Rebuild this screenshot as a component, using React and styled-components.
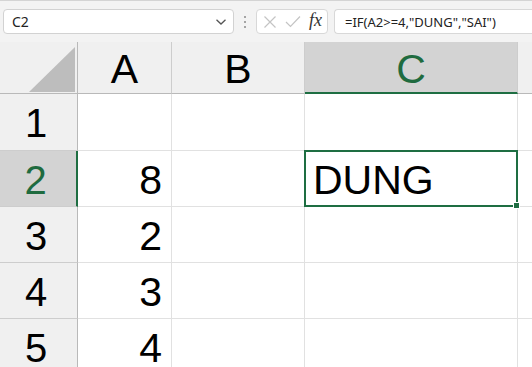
import React from 'react'
import styled, { createGlobalStyle } from 'styled-components'

const GlobalStyle = createGlobalStyle`
  html, body {
    margin: 0;
    padding: 0;
    background: #ffffff;
    overflow: hidden;
  }
  body {
    font-family: "Liberation Sans", Arial, sans-serif;
  }
`

const columns = ['A', 'B', 'C', 'D']
const rows = [
  { n: 1, a: '', c: '' },
  { n: 2, a: '8', c: 'DUNG' },
  { n: 3, a: '2', c: '' },
  { n: 4, a: '3', c: '' },
  { n: 5, a: '4', c: '' },
]

function App() {
  return (<>
    <GlobalStyle />
    <Page>
      <Toolbar>
        <NameBox>
          <NameText>C2</NameText>
          <svg width="12" height="8" viewBox="0 0 12 8">
            <path d="M1.5 1.8 L6 6 L10.5 1.8" fill="none" stroke="#555" strokeWidth="1.3" />
          </svg>
        </NameBox>
        <Dots>
          <span /><span /><span />
        </Dots>
        <FxBox>
          <svg width="14" height="14" viewBox="0 0 14 14">
            <path d="M1.5 1.5 L12.5 12.5 M12.5 1.5 L1.5 12.5" stroke="#c4c4c4" strokeWidth="1.2" fill="none" />
          </svg>
          <svg width="16" height="13" viewBox="0 0 16 13">
            <path d="M1 7 L5.5 11.5 L15 1.5" stroke="#c4c4c4" strokeWidth="1.2" fill="none" />
          </svg>
          <FxLabel>fx</FxLabel>
        </FxBox>
        <FormulaBox>=IF(A2&gt;=4,"DUNG","SAI")</FormulaBox>
      </Toolbar>

      <Sheet>
        <Corner>
          <svg width="78" height="52" viewBox="0 0 78 52">
            <polygon points="29,50 75,50 75,5" fill="#bdbdbd" />
          </svg>
        </Corner>
        {columns.map((c) => (
          <ColHeader key={c} $active={c === 'C'}>{c}</ColHeader>
        ))}

        {rows.map((r) => (
          <React.Fragment key={r.n}>
            <RowHeader $active={r.n === 2}>{r.n}</RowHeader>
            <Cell $align="right">{r.a}</Cell>
            <Cell />
            <Cell $selected={r.n === 2}>{r.c}</Cell>
            <Cell />
          </React.Fragment>
        ))}
      </Sheet>
    </Page>
  </>)
}

const Page = styled.div`
  width: 532px;
  height: 367px;
  overflow: hidden;
  display: flex;
  flex-direction: column;
`

const Toolbar = styled.div`
  height: 42px;
  box-sizing: border-box;
  border-top: 1px solid #d4d4d4;
  background: #f3f3f3;
  display: flex;
  align-items: flex-start;
  padding: 8px 0 0 3px;
  flex-shrink: 0;
`

const NameBox = styled.div`
  width: 231px;
  height: 25px;
  box-sizing: border-box;
  background: #ffffff;
  border: 1px solid #d2d2d2;
  border-radius: 4px;
  display: flex;
  align-items: center;
  justify-content: space-between;
  padding: 0 6px 0 8px;
`

const NameText = styled.span`
  font-family: "Noto Sans", "Open Sans", sans-serif;
  font-size: 14px;
  color: #222;
`

const Dots = styled.div`
  width: 22px;
  height: 25px;
  display: flex;
  flex-direction: column;
  align-items: center;
  justify-content: center;
  gap: 3px;

  span {
    width: 2px;
    height: 2px;
    background: #8a8a8a;
    border-radius: 1px;
  }
`

const FxBox = styled.div`
  width: 72px;
  height: 25px;
  box-sizing: border-box;
  background: #ffffff;
  border: 1px solid #d8d8d8;
  border-radius: 4px;
  display: flex;
  align-items: center;
  gap: 8px;
  padding: 0 0 0 6px;
  margin-right: 6px;
`

const FxLabel = styled.span`
  font-family: "Liberation Serif", "Times New Roman", serif;
  font-style: italic;
  font-size: 18px;
  color: #333;
  margin-top: -2px;
`

const FormulaBox = styled.div`
  flex: 1;
  height: 25px;
  box-sizing: border-box;
  background: #ffffff;
  border: 1px solid #d8d8d8;
  border-right: none;
  border-radius: 4px 0 0 4px;
  display: flex;
  align-items: center;
  padding-left: 10px;
  font-family: "Noto Sans", "Open Sans", sans-serif;
  font-size: 13px;
  color: #222;
  white-space: nowrap;
`

const Sheet = styled.div`
  display: grid;
  grid-template-columns: 78px 94px 133px 213px 200px;
  grid-template-rows: 52px 57px repeat(4, 56px);
  background: #ffffff;
  font-size: 40px;
  color: #000;
`

const Corner = styled.div`
  background: #f0f0f0;
  border-right: 1px solid #b9b9b9;
  border-bottom: 1px solid #b9b9b9;
  box-sizing: border-box;
  overflow: hidden;
  svg { display: block; }
`

const ColHeader = styled.div`
  box-sizing: border-box;
  background: ${(p) => (p.$active ? '#d3d3d3' : '#f0f0f0')};
  color: ${(p) => (p.$active ? '#1f6b3f' : '#000')};
  border-right: 1px solid #cdcdcd;
  border-bottom: ${(p) => (p.$active ? '2px solid #1e6e42' : '1px solid #b9b9b9')};
  display: flex;
  align-items: center;
  justify-content: center;
  padding-top: 4px;
  font-size: 41px;
`

const RowHeader = styled.div`
  box-sizing: border-box;
  background: ${(p) => (p.$active ? '#d3d3d3' : '#f0f0f0')};
  color: ${(p) => (p.$active ? '#1f6b3f' : '#000')};
  border-right: ${(p) => (p.$active ? '2px solid #1e6e42' : '1px solid #b9b9b9')};
  border-bottom: 1px solid #cdcdcd;
  display: flex;
  align-items: center;
  justify-content: center;
  padding: 3px 5px 0 0;
`

const Cell = styled.div`
  position: relative;
  box-sizing: border-box;
  border-right: 1px solid #e1e1e1;
  border-bottom: 1px solid #e1e1e1;
  display: flex;
  align-items: center;
  justify-content: ${(p) => (p.$align === 'right' ? 'flex-end' : 'flex-start')};
  padding: 3px 9px 0 8px;
  font-size: 41px;
  white-space: nowrap;

  ${(p) => p.$selected && `
    &::after {
      content: '';
      position: absolute;
      left: -1px;
      top: -1px;
      right: -1px;
      bottom: -1px;
      border: 2px solid #1e6e42;
    }
    &::before {
      content: '';
      position: absolute;
      right: -3px;
      bottom: -3px;
      width: 5px;
      height: 5px;
      background: #1e6e42;
      border: 1px solid #fff;
      z-index: 1;
    }
  `}
`

export default App
